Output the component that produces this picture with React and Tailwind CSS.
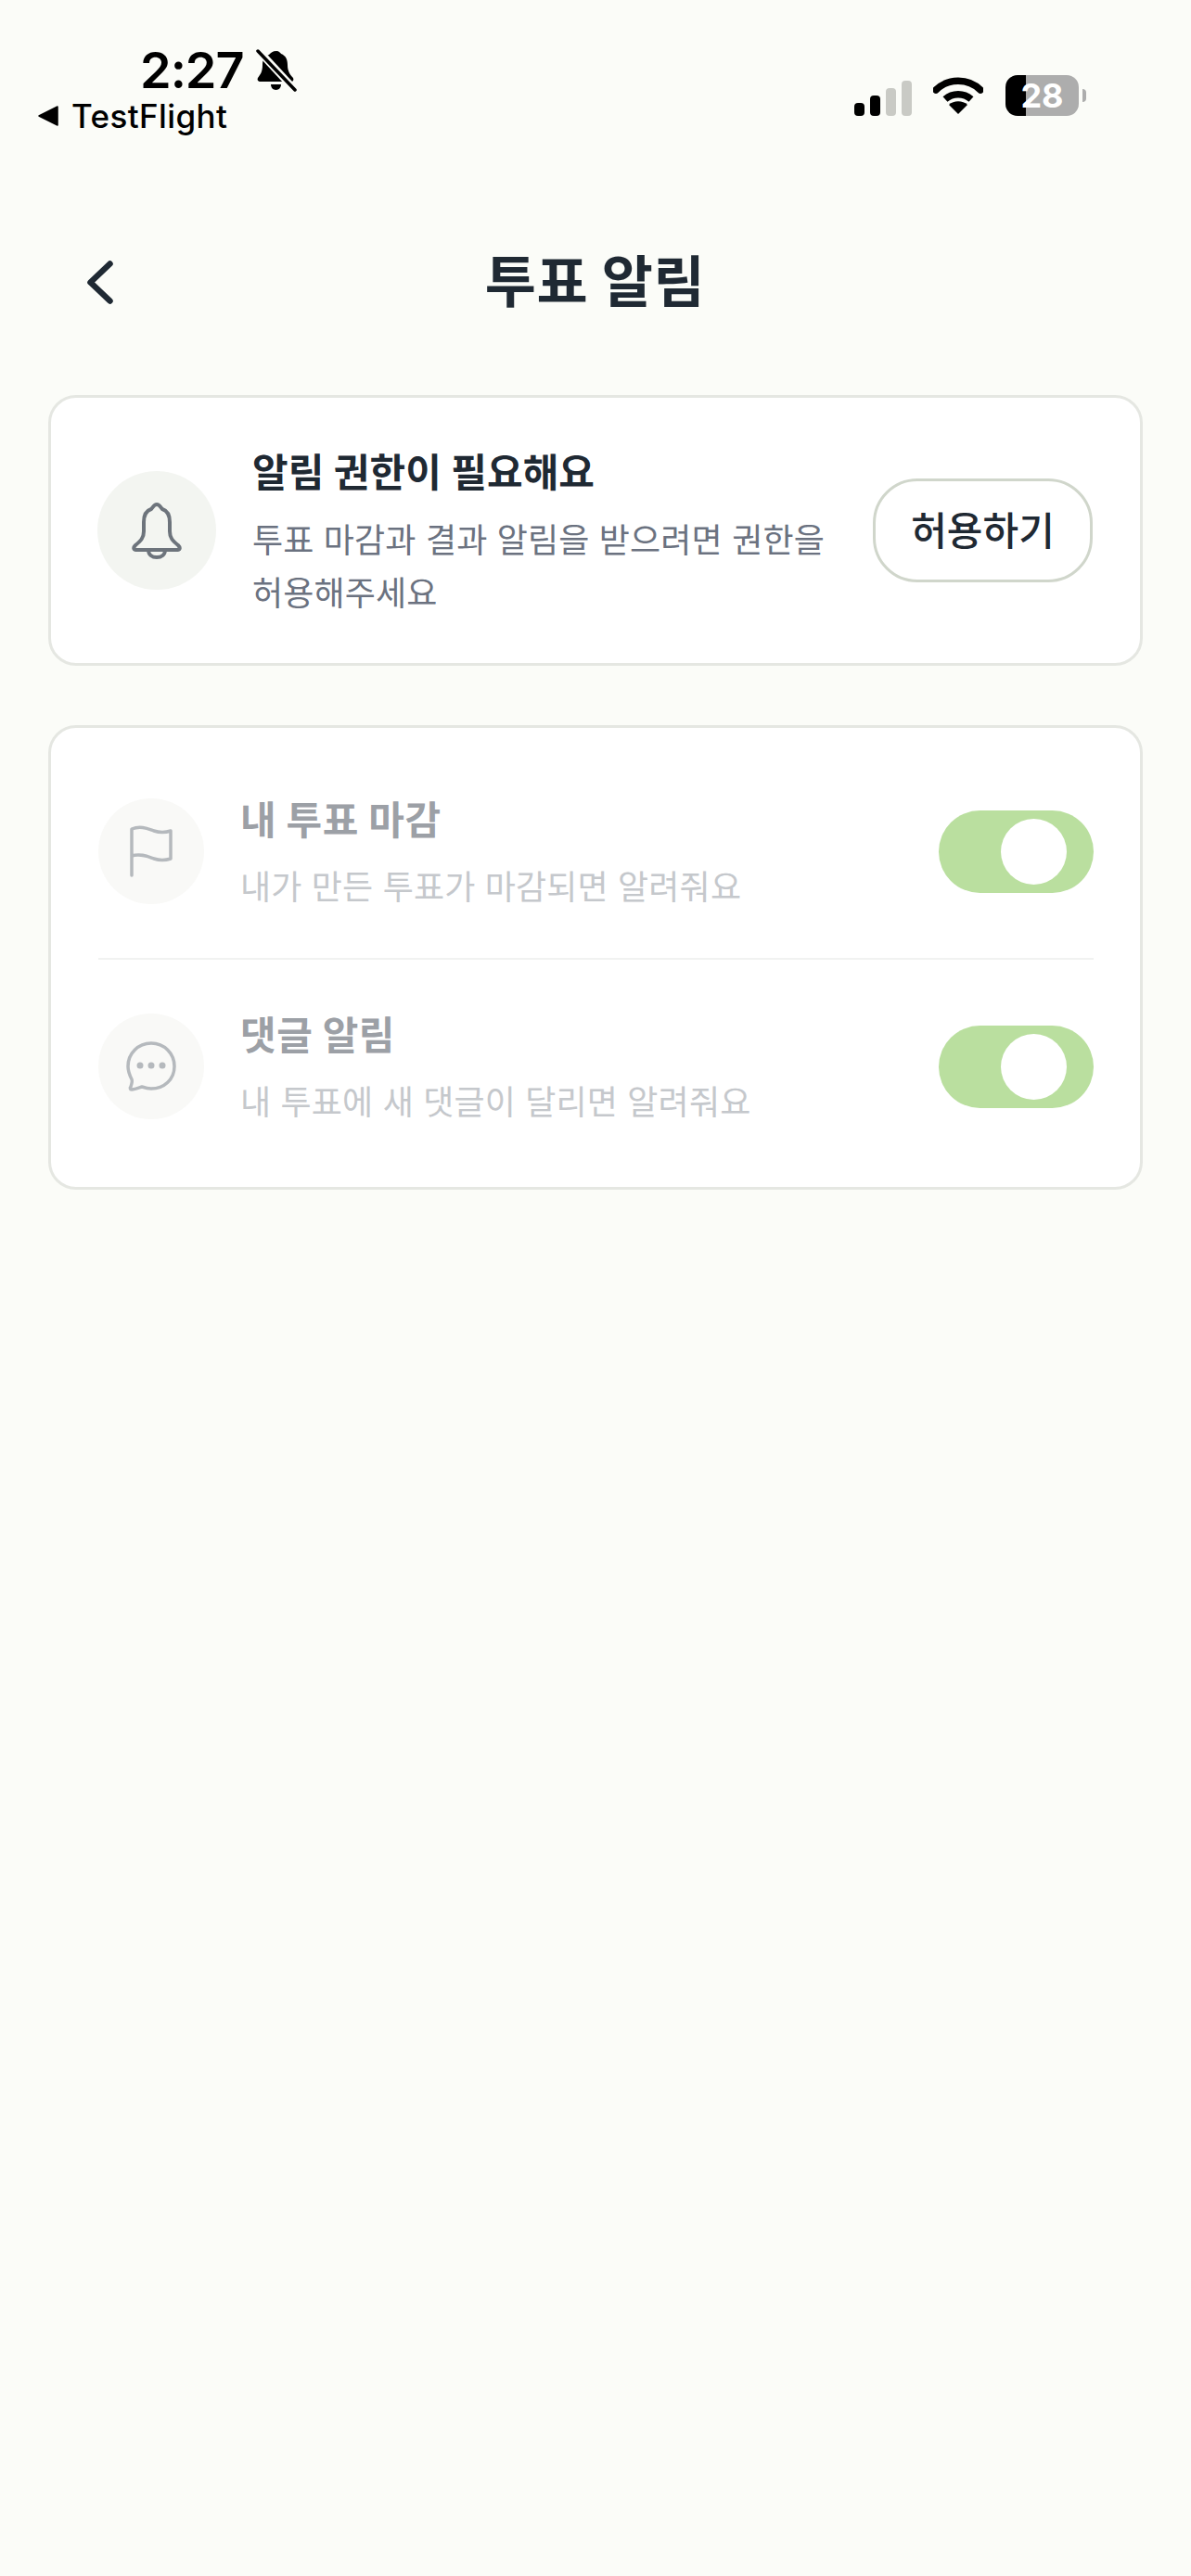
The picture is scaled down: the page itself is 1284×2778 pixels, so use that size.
import React from 'react';

const kr = 'font-["Inter","Noto_Sans_CJK_KR",sans-serif]';

function StatusBar() {
  return (
    <div className="flex justify-between h-[249px]">
      <div className="pl-[41px] pt-[46px]">
        <div className="flex items-center pl-[110px] h-[60px]">
          <span className='font-["Inter",sans-serif] text-[54px] leading-[60px] font-semibold text-black tracking-[-1px]'>2:27</span>
          <svg width="44" height="46" viewBox="0 0 44 46" className="ml-[13px]">
            <path d="M22 2c3 0 4 2 5 3 5 2 7 6 7 12 0 6 2 10 6 14 1 2 0 4-2 4H5c-3 0-4-2-3-4 3-4 5-7 5-14 0-6 2-9 7-11 2-2 4-4 8-4z" fill="#000" />
            <path d="M16 38h11c0 3-2 6-5.500 6S16 41 16 38z" fill="#000" />
            <path d="M4 3l37 40" stroke="#fbfcf8" strokeWidth="8" />
            <path d="M2 2l40 42" stroke="#000" strokeWidth="3.500" strokeLinecap="round" />
          </svg>
        </div>
        <div className="flex items-center h-[36px] mt-[1px]">
          <svg width="22" height="22" viewBox="0 0 22 22">
            <path d="M21 1v20L1 11z" fill="#000" stroke="#000" strokeWidth="1.500" strokeLinejoin="round" />
          </svg>
          <span className='font-["Inter",sans-serif] text-[35px] leading-[36px] font-medium text-black ml-[14px] tracking-[0.4px]'>TestFlight</span>
        </div>
      </div>
      <div className="flex items-end h-[125px] pr-[113px]">
        <div className="flex items-end gap-[6px]">
          <div className="w-[11px] h-[14px] rounded-[4px] bg-black" />
          <div className="w-[11px] h-[22px] rounded-[4px] bg-black" />
          <div className="w-[11px] h-[30px] rounded-[4px] bg-[#c9cac5]" />
          <div className="w-[11px] h-[38px] rounded-[4px] bg-[#c9cac5]" />
        </div>
        <svg width="54" height="40" viewBox="0 0 54 40" className="ml-[23px] mb-[2px]">
          <path d="M3 14C16 1 38 1 51 14" fill="none" stroke="#000" strokeWidth="7.500" strokeLinecap="round" strokeLinejoin="round" />
          <path d="M13 24c8-7 20-7 28 0" fill="none" stroke="#000" strokeWidth="7.500" />
          <path d="M27 40l-10-10c5-5 15-5 20 0z" fill="#000" />
        </svg>
        <div className="flex items-center ml-[24px]">
          <div className='w-[79px] h-[44px] rounded-[13px] bg-[linear-gradient(90deg,#000_0,#000_22px,#adadad_22px,#adadad_100%)] flex items-center justify-center font-["Inter",sans-serif] text-[36px] font-bold text-white leading-none'>
            28
          </div>
          <div className="w-[4px] h-[14px] ml-[4px] rounded-r-[4px] bg-[#adadad]" />
        </div>
      </div>
    </div>
  );
}

function Header() {
  return (
    <div className="flex items-center justify-between h-[110px] pl-[94px] pr-[94px]">
      <svg width="28" height="47" viewBox="0 0 28 47">
        <path d="M24.500 3.500L3.500 23.500 24.500 43.500" fill="none" stroke="#1f2933" strokeWidth="6.500" strokeLinecap="round" strokeLinejoin="round" />
      </svg>
      <div className={`${kr} text-[60px] font-bold text-[#1f2933] leading-none tracking-[0.5px] mr-[1px]`}>투표 알림</div>
      <div className="w-[28px]" />
    </div>
  );
}

function NoticeCard() {
  return (
    <div className="flex items-center h-[292px] rounded-[30px] border-[3px] border-[#e5e7e2] bg-white pl-[50px] pr-[51px]">
      <div className="flex items-center justify-center w-[128px] h-[128px] rounded-full bg-[#f3f5f1] shrink-0">
        <svg width="54" height="62" viewBox="0 0 54 62" fill="none" stroke="#6d747c" strokeWidth="4" strokeLinejoin="round" strokeLinecap="round">
          <path d="M27 3c3 0 4 3 6 5 6 2 8 8 8 14v10c0 7 3 10 9 15 3 3 2 5-2 5H6c-4 0-5-2-2-5 6-5 9-8 9-15V22c0-6 2-12 8-14 2-2 3-5 6-5z" />
          <path d="M18 52c0 5 4 8 9 8s9-3 9-8" />
        </svg>
      </div>
      <div className="ml-[39px] flex-1 pt-[5px]">
        <div className={`${kr} text-[42px] leading-[60px] font-semibold text-[#1f2933]`}>알림 권한이 필요해요</div>
        <div className={`${kr} text-[36px] leading-[57px] text-[#6b7280] mt-[15px] w-[630px] tracking-[0.15px] break-keep`}>
          투표 마감과 결과 알림을 받으려면 권한을 허용해주세요
        </div>
      </div>
      <button className={`${kr} w-[237px] h-[112px] rounded-[48px] border-[3px] border-[#d0d6cb] bg-white text-[42px] font-medium text-[#1f2933] shrink-0`}>
        허용하기
      </button>
    </div>
  );
}

function Toggle() {
  return (
    <div className="flex items-center justify-end w-[167px] h-[89px] rounded-full bg-[#badf9f] pr-[29px] shrink-0">
      <div className="w-[71px] h-[71px] rounded-full bg-white" />
    </div>
  );
}

function SettingRow({ icon, title, desc }) {
  return (
    <div className="flex items-center py-[58px]">
      <div className="flex items-center justify-center w-[114px] h-[114px] rounded-full bg-[#f9f9f7] shrink-0">
        {icon}
      </div>
      <div className="ml-[39px] flex-1 pt-[6px]">
        <div className={`${kr} text-[42px] leading-[36px] font-bold text-[#9ca0a6] tracking-[0.5px]`}>{title}</div>
        <div className={`${kr} text-[36px] leading-[36px] text-[#c5c8cc] mt-[36px] tracking-[0.15px]`}>{desc}</div>
      </div>
      <Toggle />
    </div>
  );
}

function SettingsCard() {
  return (
    <div className="mt-[64px] rounded-[30px] border-[3px] border-[#e5e7e2] bg-white pl-[51px] pr-[50px] pt-[18px] pb-[15px]">
      <SettingRow
        title="내 투표 마감"
        desc="내가 만든 투표가 마감되면 알려줘요"
        icon={
          <svg width="48" height="56" viewBox="0 0 48 56" fill="none" stroke="#b5b9bd" strokeWidth="3.500" strokeLinecap="round" strokeLinejoin="round">
            <path d="M3 54V4c10-4 18 0 24 2 6 2 12 2 18 0v30c-6 2-12 2-18 0-6-2-14-6-24-3" />
          </svg>
        }
      />
      <div className="h-[2px] bg-[#f1f2f1]" />
      <SettingRow
        title="댓글 알림"
        desc="내 투표에 새 댓글이 달리면 알려줘요"
        icon={
          <svg width="54" height="54" viewBox="0 0 54 54" fill="none" stroke="#b5b9bd" strokeWidth="3.500" strokeLinejoin="round">
            <path d="M27 2c14 0 25 11 25 25S41 51 27 51c-4 0-7-1-10-2-3 1-8 3-11 3-2 0-2-2-1-3 1-3 2-6 1-8-2-4-4-9-4-14C2 13 13 2 27 2z" />
            <circle cx="15" cy="26" r="3.500" fill="#b5b9bd" stroke="none" />
            <circle cx="27" cy="26" r="3.500" fill="#b5b9bd" stroke="none" />
            <circle cx="39" cy="26" r="3.500" fill="#b5b9bd" stroke="none" />
          </svg>
        }
      />
    </div>
  );
}

export default function App() {
  return (
    <div className="min-h-[2778px] bg-[#fbfcf8]">
      <StatusBar />
      <Header />
      <div className="px-[52px] mt-[67px]">
        <NoticeCard />
        <SettingsCard />
      </div>
    </div>
  );
}
